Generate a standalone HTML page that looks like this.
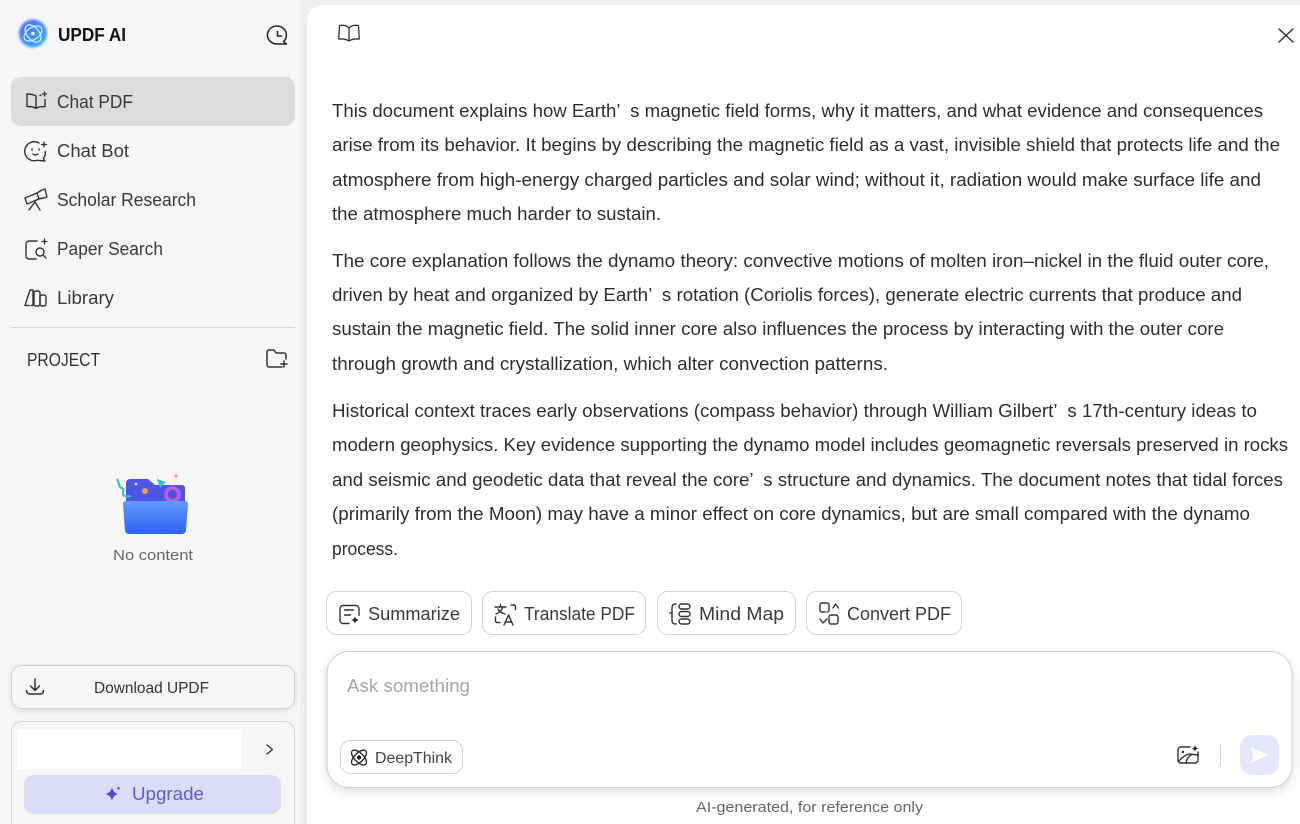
<!DOCTYPE html>
<html><head><meta charset="utf-8"><title>UPDF AI</title>
<style>
html,body{margin:0;padding:0;width:1300px;height:824px;overflow:hidden;background:#f6f6f6}
svg{display:block}
text{font-family:"Liberation Sans",sans-serif;fill:#333;white-space:pre}
.b text{font-size:18px;fill:#2e2e2e}
.n text{font-size:18px;fill:#3a3a3a}
.c text{font-size:18px;fill:#3a3a3a}
.i{fill:none;stroke:#333;stroke-width:1.5;stroke-linecap:round;stroke-linejoin:round}
</style></head><body>
<svg xmlns="http://www.w3.org/2000/svg" width="1300" height="824" viewBox="0 0 1300 824">
<defs>
<filter id="s1" x="-5%" y="-20%" width="110%" height="150%"><feDropShadow dx="0" dy="4" stdDeviation="5" flood-color="#000" flood-opacity=".13"/></filter>
<filter id="s2" x="-10%" y="-30%" width="120%" height="170%"><feDropShadow dx="0" dy="2" stdDeviation="3" flood-color="#000" flood-opacity=".1"/></filter>
<filter id="bl" x="-30%" y="-30%" width="160%" height="160%"><feGaussianBlur stdDeviation="1.4"/></filter>
<linearGradient id="lg" x1="0" y1="0" x2="1" y2="1"><stop offset="0" stop-color="#6a62ee"/><stop offset=".5" stop-color="#3d8df5"/><stop offset="1" stop-color="#35b8f5"/></linearGradient>
<linearGradient id="fg" x1="0" y1="0" x2="0" y2="1"><stop offset="0" stop-color="#5f9bf8"/><stop offset="1" stop-color="#2f62f5"/></linearGradient>
</defs>
<rect width="1300" height="824" fill="#f6f6f6"/>
<rect x="300" y="0" width="1000" height="824" fill="#efefef"/>
<rect x="307" y="5" width="1010" height="840" rx="16" fill="#fff"/>

<!-- logo -->
<circle cx="33" cy="33.500" r="14" fill="url(#lg)" filter="url(#bl)"/>
<g fill="none" stroke="#dff0ff" stroke-width="1.200"><ellipse cx="33" cy="33.500" rx="10" ry="6" transform="rotate(-35 33 33.500)"/><ellipse cx="33" cy="33.500" rx="10" ry="6" transform="rotate(50 33 33.500)"/></g>
<circle cx="33" cy="33.500" r="1.800" fill="#fff"/>
<text x="58" y="41" font-size="18" font-weight="700" style="fill:#111" textLength="68" lengthAdjust="spacingAndGlyphs">UPDF AI</text>
<!-- history -->
<g class="i" style="stroke:#222"><path d="M277 44a9.500 9 0 1 1 6.500-2.500l3 2.500z"/><path d="M277.500 31.500v4.500h4"/></g>

<!-- nav -->
<rect x="11" y="77" width="284" height="49" rx="10" fill="#dcdcdc"/>
<g class="n">
<text x="57" y="108" textLength="76" lengthAdjust="spacingAndGlyphs">Chat PDF</text>
<text x="57" y="157" textLength="72" lengthAdjust="spacingAndGlyphs">Chat Bot</text>
<text x="57" y="206" textLength="139" lengthAdjust="spacingAndGlyphs">Scholar Research</text>
<text x="57" y="255" textLength="106" lengthAdjust="spacingAndGlyphs">Paper Search</text>
<text x="57" y="304" textLength="57" lengthAdjust="spacingAndGlyphs">Library</text>
</g>
<g class="i" style="stroke-width:1.400">
<!-- chat pdf -->
<path d="M36 96c-2-1.400-5-2-9-2v12.500c4 0 7 .5 9 1.800 1.500-1 4-1.700 9-1.700V99.500M36 96v12M40 95.500l1-.3"/>
<path d="M44.500 92v4M42.500 94h4" stroke-width="1.300"/>
<!-- chat bot -->
<path d="M39 143a9.500 9.500 0 1 0-2 17.300l8 .7-1.700-2.500a9 9 0 0 0 2-7"/>
<path d="M32 149v1M39 149v1M33 154c1.500 1.200 3.500 1.200 5 0"/>
<path d="M44 142v5M41.500 144.500h5" stroke-width="1.300"/>
<!-- scholar -->
<path d="M25 198l12-5 2 6-12 5zM37 193l5-3 3-1 2 8-3 1-6 1"/>
<path d="M35 202l-6 8M35 202l5 8"/>
<!-- paper search -->
<path d="M37 241h-8a3 3 0 0 0-3 3v12a3 3 0 0 0 3 3h7"/>
<circle cx="40" cy="252" r="4"/><path d="M43 255l3 3"/>
<path d="M42 241.500h5M44.500 239v5" stroke-width="1.300"/>
<!-- library -->
<path d="M30 290l-5 15.500h4M30 290h3M33 291v14.500h-2"/>
<rect x="34" y="291" width="6" height="15" rx="2"/><rect x="40" y="295" width="6" height="11" rx="2"/>
</g>
<rect x="11" y="327" width="284" height="1" fill="#d4d4d4"/>
<text x="27" y="366" font-size="18" style="fill:#333" textLength="73" lengthAdjust="spacingAndGlyphs">PROJECT</text>
<g class="i"><path d="M282 367h-13a2 2 0 0 1-2-2v-13a2 2 0 0 1 2-2h5l2 3h8a2 2 0 0 1 2 2v4"/><path d="M284 361v6M281 364h6"/></g>

<!-- empty illustration -->
<path d="M126 483a4 4 0 0 1 4-4h18l7 6h27a3 3 0 0 1 3 3v16h-59z" fill="#4e55e6"/>
<path d="M117 479c3 5 1 8 5 9 4 2-2 6 3 8 2 1 4 0 6 0" fill="none" stroke="#2fc1d6" stroke-width="2.200"/>
<path d="M157 479l9 3-6 6z" fill="#2fbfc4"/>
<circle cx="145" cy="491" r="3" fill="#e2a84a"/>
<circle cx="136" cy="484" r="1.300" fill="#dfe6ff"/>
<circle cx="172.500" cy="494.500" r="6.500" fill="none" stroke="#c060e0" stroke-width="3.500"/>
<circle cx="176" cy="476" r="1.600" fill="#e79a90"/>
<path d="M123 504a3 3 0 0 1 3-3h59a3 3 0 0 1 3 3l-2 26a4 4 0 0 1-4 4h-53a4 4 0 0 1-4-4z" fill="url(#fg)"/>
<text x="113" y="560" font-size="15" style="fill:#666" textLength="80" lengthAdjust="spacingAndGlyphs">No content</text>

<!-- download -->
<rect x="11.500" y="665.500" width="283" height="43" rx="10" fill="#f6f6f6" stroke="#cfcfcf" filter="url(#s2)"/>
<g class="i"><path d="M35 679v11M30.500 686l4.500 4.500 4.500-4.500M26.500 690.500c0 2.500 1.500 3.500 3.500 3.500h10c2 0 3.500-1 3.500-3.500"/></g>
<text x="94" y="693" font-size="15.500" style="fill:#333" textLength="115" lengthAdjust="spacingAndGlyphs">Download UPDF</text>

<!-- card -->
<rect x="11.500" y="721.500" width="283" height="120" rx="10" fill="#f6f6f6" stroke="#d4d4d4"/>
<rect x="17" y="729" width="224" height="40" fill="#fff"/>
<path class="i" d="M267 745l5.500 4.500-5.500 4.500" style="stroke-width:1.400"/>
<rect x="24" y="775" width="257" height="39" rx="10" fill="#dcdcf8"/>
<path d="M112 787c.8 4 2.500 6 6 7-3.500 1-5.200 3-6 7-.8-4-2.500-6-7-7 4.500-1 6.200-3 7-7z" fill="#4f49d6"/>
<path d="M118.500 786c.3 1.500.8 2 2 2.300-1.200.3-1.700.8-2 2.200-.3-1.400-.8-1.900-2-2.200 1.200-.3 1.700-.8 2-2.300z" fill="#4f49d6"/>
<text x="132" y="800" font-size="18" style="fill:#5f5ad6" textLength="72" lengthAdjust="spacingAndGlyphs">Upgrade</text>

<!-- top icons -->
<g class="i" style="stroke:#333;stroke-width:1.300">
<path d="M349 28c-2-2.500-6-3-9.500-2.500l-.8 13.500c4-.3 7.500 0 10.300 2 2.800-2 6.300-2.300 10.300-2l-.8-13.500c-3.500-.5-7.500 0-9.500 2.500zM349 28v13"/>
<path d="M1279 29l14 13M1293 29l-14 13" style="stroke-width:1.500"/>
</g>

<!-- body text -->
<g class="b">
<text x="332" y="117" textLength="931" lengthAdjust="spacingAndGlyphs">This document explains how Earth’  s magnetic field forms, why it matters, and what evidence and consequences</text>
<text x="332" y="151" textLength="948" lengthAdjust="spacingAndGlyphs">arise from its behavior. It begins by describing the magnetic field as a vast, invisible shield that protects life and the</text>
<text x="332" y="186" textLength="929" lengthAdjust="spacingAndGlyphs">atmosphere from high-energy charged particles and solar wind; without it, radiation would make surface life and</text>
<text x="332" y="220" textLength="329" lengthAdjust="spacingAndGlyphs">the atmosphere much harder to sustain.</text>
<text x="332" y="267" textLength="937" lengthAdjust="spacingAndGlyphs">The core explanation follows the dynamo theory: convective motions of molten iron–nickel in the fluid outer core,</text>
<text x="332" y="301" textLength="910" lengthAdjust="spacingAndGlyphs">driven by heat and organized by Earth’  s rotation (Coriolis forces), generate electric currents that produce and</text>
<text x="332" y="335" textLength="892" lengthAdjust="spacingAndGlyphs">sustain the magnetic field. The solid inner core also influences the process by interacting with the outer core</text>
<text x="332" y="370" textLength="556" lengthAdjust="spacingAndGlyphs">through growth and crystallization, which alter convection patterns.</text>
<text x="332" y="417" textLength="925" lengthAdjust="spacingAndGlyphs">Historical context traces early observations (compass behavior) through William Gilbert’  s 17th-century ideas to</text>
<text x="332" y="451" textLength="956" lengthAdjust="spacingAndGlyphs">modern geophysics. Key evidence supporting the dynamo model includes geomagnetic reversals preserved in rocks</text>
<text x="332" y="486" textLength="951" lengthAdjust="spacingAndGlyphs">and seismic and geodetic data that reveal the core’  s structure and dynamics. The document notes that tidal forces</text>
<text x="332" y="520" textLength="918" lengthAdjust="spacingAndGlyphs">(primarily from the Moon) may have a minor effect on core dynamics, but are small compared with the dynamo</text>
<text x="332" y="555" textLength="66" lengthAdjust="spacingAndGlyphs">process.</text>
</g>

<!-- chips -->
<g fill="#fff" stroke="#d2d2d2">
<rect x="326.500" y="591.500" width="145" height="43" rx="10"/>
<rect x="482.500" y="591.500" width="163" height="43" rx="10"/>
<rect x="657.500" y="591.500" width="138" height="43" rx="10"/>
<rect x="806.500" y="591.500" width="155" height="43" rx="10"/>
</g>
<g class="c">
<text x="368" y="620" textLength="92" lengthAdjust="spacingAndGlyphs">Summarize</text>
<text x="524" y="620" textLength="111" lengthAdjust="spacingAndGlyphs">Translate PDF</text>
<text x="699" y="620" textLength="85" lengthAdjust="spacingAndGlyphs">Mind Map</text>
<text x="847" y="620" textLength="104" lengthAdjust="spacingAndGlyphs">Convert PDF</text>
</g>
<g class="i" style="stroke-width:1.400">
<!-- summarize -->
<path d="M349 623.500h-6a3 3 0 0 1-3-3v-12a3 3 0 0 1 3-3h13a3 3 0 0 1 3 3v7M344.500 610h9M344.500 615h6"/>
<!-- translate -->
<path d="M495 607h11M500.500 604.500v2.500M503 607c-1 3-4 6-7 7M498 609c1 2 4 4 7 5M511 605h3a1.500 1.500 0 0 1 1.500 1.500v3M495.500 617v4a1.500 1.500 0 0 0 1.500 1.500h3M504 625l4.500-10 4.500 10M505.500 622h6"/>
<!-- mind map -->
<path d="M676 604c-3 0-4 1-4 4v5h-2M672 613v7c0 3 1 4 4 4"/>
<rect x="679" y="604" width="11" height="5" rx="2.500"/><rect x="679" y="611.500" width="11" height="5" rx="2.500"/><rect x="679" y="619" width="11" height="5" rx="2.500"/>
<!-- convert -->
<path d="M825 612h-3a2 2 0 0 1-2-2v-5a2 2 0 0 1 2-2h5a2 2 0 0 1 2 2v5a2 2 0 0 1-2 2"/><rect x="829" y="615" width="9" height="9" rx="2"/>
<path d="M833 608l2.500-4 3 4M827 619l-4 4-3-4" />
</g>
<path d="M355 616c.5 2.500 1.500 3.500 4 4-2.500.5-3.500 1.500-4 4-.5-2.500-1.500-3.500-4-4 2.500-.5 3.500-1.500 4-4z" fill="#222"/>

<!-- input -->
<rect x="327" y="651.500" width="965" height="136" rx="22" fill="#fff" stroke="#cfcfcf" filter="url(#s1)"/>
<text x="347" y="692" font-size="18" style="fill:#a6a6a6" textLength="123" lengthAdjust="spacingAndGlyphs">Ask something</text>
<rect x="340.500" y="740.500" width="122" height="33" rx="10" fill="#fff" stroke="#d2d2d2"/>
<g fill="none" stroke="#222" stroke-width="1.300"><ellipse cx="359" cy="757.500" rx="9.500" ry="4.500" transform="rotate(45 359 757.500)"/><ellipse cx="359" cy="757.500" rx="9.500" ry="4.500" transform="rotate(-45 359 757.500)"/></g>
<circle cx="359" cy="757.500" r="2.200" fill="#222"/>
<text x="375" y="763" font-size="15.500" style="fill:#444" textLength="77" lengthAdjust="spacingAndGlyphs">DeepThink</text>
<g class="i" style="stroke-width:1.400"><path d="M1190 747h-9a3 3 0 0 0-3 3v10a3 3 0 0 0 3 3h14a3 3 0 0 0 3-3v-8"/><path d="M1179 761c4-5 7-6 10-7l9 1M1186 763c1-4 3-7 5-8"/></g>
<circle cx="1183" cy="752" r="1.200" fill="#222"/>
<path d="M1195 745c.4 2.200 1.300 3.100 3.500 3.500-2.200.4-3.100 1.300-3.500 3.500-.4-2.200-1.300-3.100-3.500-3.500 2.200-.4 3.100-1.300 3.500-3.500z" fill="#222"/>
<rect x="1220" y="745" width="1" height="20" fill="#d0d0d0"/>
<rect x="1240" y="735" width="39" height="40" rx="12" fill="#e6e6fb"/>
<path d="M1251 747l17 8-17 8 2.500-8z" fill="#fff"/>
<text x="696" y="812" font-size="15" style="fill:#666" textLength="227" lengthAdjust="spacingAndGlyphs">AI-generated, for reference only</text>
</svg>
</body></html>
